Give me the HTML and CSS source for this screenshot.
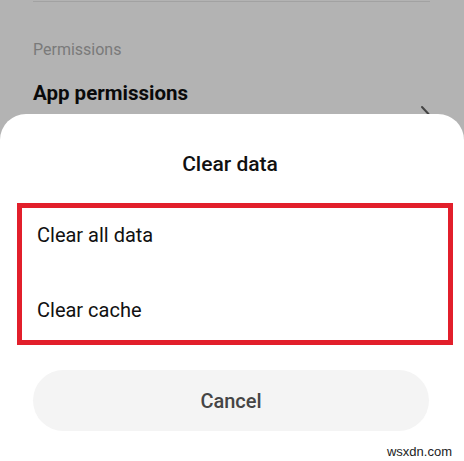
FILE: index.html
```html
<!DOCTYPE html>
<html lang="en">
<head>
<meta charset="utf-8">
<title>Clear data</title>
<link rel="stylesheet" href="styles.css">
</head>
<body>
<div class="screen">
  <div class="page">
    <div class="divider"></div>
    <div class="section-label">Permissions</div>
    <div class="row">
      <div class="row-title">App permissions</div>
      <svg class="chevron" width="10" height="18" viewBox="0 0 10 18">
        <path d="M2 2 L8.5 9 L2 16" fill="none" stroke="#444" stroke-width="2" stroke-linecap="round" stroke-linejoin="round"/>
      </svg>
    </div>
  </div>

  <div class="sheet">
    <div class="sheet-title">Clear data</div>
    <div class="options">
      <div class="option">Clear all data</div>
      <div class="option">Clear cache</div>
    </div>
    <div class="cancel">Cancel</div>
  </div>

  <div class="watermark">wsxdn.com</div>
</div>
</body>
</html>
```

FILE: styles.css
```css
html, body {
  margin: 0;
  padding: 0;
}

body {
  width: 464px;
  height: 461px;
  overflow: hidden;
  font-family: Roboto, "Noto Sans", "Liberation Sans", sans-serif;
}

.screen {
  position: relative;
  width: 464px;
  height: 461px;
  background: #b3b3b3;
  overflow: hidden;
}

.page {
  padding: 0 34px 0 33px;
}

.divider {
  margin-top: 1px;
  height: 1px;
  background: #a2a2a2;
}

.section-label {
  margin-top: 38px;
  font-size: 16px;
  line-height: 20px;
  color: #7a7a7a;
}

.row {
  margin-top: 21px;
  display: flex;
  justify-content: space-between;
  align-items: flex-start;
}

.row-title {
  font-size: 20.5px;
  line-height: 24px;
  font-weight: 700;
  color: #0a0a0a;
}

.chevron {
  margin-top: 24px;
}

.sheet {
  position: absolute;
  left: 0;
  right: 0;
  top: 114px;
  bottom: 0;
  background: #ffffff;
  border-radius: 26px 26px 0 0;
  padding-top: 38px;
  box-sizing: border-box;
}

.sheet-title {
  text-align: center;
  font-size: 21px;
  line-height: 24px;
  font-weight: 500;
  color: #111;
  padding-right: 4px;
}

.options {
  margin: 27px 11px 0 17px;
  border: 5px solid #e21f2b;
  padding: 15px 15px 18px 15px;
  display: flex;
  flex-direction: column;
  gap: 51px;
}

.option {
  font-size: 20px;
  line-height: 24px;
  color: #111;
}

.cancel {
  margin: 25px 35px 0 33px;
  height: 61px;
  border-radius: 31px;
  background: #f4f4f4;
  display: flex;
  align-items: center;
  justify-content: center;
  font-size: 20px;
  font-weight: 500;
  color: #454545;
}

.watermark {
  position: absolute;
  right: 12px;
  bottom: 1px;
  font-family: "Liberation Sans", Arial, sans-serif;
  font-size: 13px;
  line-height: 16px;
  color: #222;
}
```
